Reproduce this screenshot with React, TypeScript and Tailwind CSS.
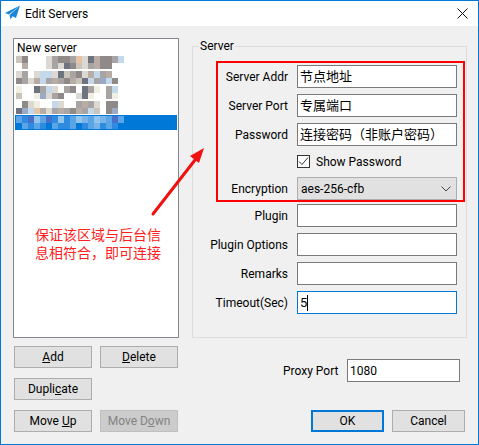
import React from 'react';

const palette: Record<string, string> = {
  '.': 'transparent',
  a: '#c9c4bc',
  b: '#8f8a88',
  c: '#a8a4a4',
  d: '#dcd8d2',
  e: '#e6c4a8',
  f: '#c4d8ec',
  g: '#6d7480',
  h: '#f1eee2',
  i: '#9aa9c8',
  j: '#b8aca4',
  p: '#5aa5e6',
  q: '#2f8be0',
  r: '#93c4ee',
  s: '#4a6fc8',
  t: '#0078d7',
  u: '#76b4ea',
};

// blurred out server names, one string per row of blocks
const blurred: { rows: [string, string]; selected?: boolean }[] = [
  { rows: ['ab...dcbbcedgjbbcf', '.j...dcdgbadcjbb..'] },
  { rows: ['dc.dffdgacbdjfcj..', 'bcdjfcjcbjagfcifb.'] },
  { rows: ['h..gcfd.cb.gch.cf.', 'a..hidcb..dgh..ch.'] },
  { rows: ['.bdh..fd..cjcd.bb.', 'gifejdcjcbjcfa.bi.'] },
  { rows: ['pqsrpsqrqpruprupsp', 'tpqpqtpqqptqpuqpqt'], selected: true },
];

const Cell = ({ c, w }: { c: string; w: number }) => (
  <div className="h-full shrink-0" style={{ width: w, backgroundColor: palette[c] }} />
);

const Btn = ({ children, disabled, primary, className = '' }: { children: React.ReactNode; disabled?: boolean; primary?: boolean; className?: string }) => (
  <div
    className={`h-[22px] flex items-center justify-center text-[12px] ${
      disabled
        ? 'bg-[#cccccc] border border-[#bfbfbf] text-[#838383]'
        : primary
        ? 'bg-[#e1e1e1] border-2 border-[#0078d7] text-black'
        : 'bg-[#e1e1e1] border border-[#adadad] text-black'
    } ${className}`}
  >
    <span>{children}</span>
  </div>
);

const Field = ({ label, value, focused }: { label: string; value?: string; focused?: boolean }) => (
  <div className="flex items-center h-[23px]">
    <div className="w-[88px] text-right text-[12px] text-black whitespace-nowrap">{label}</div>
    <div
      className={`ml-[9px] w-[160px] h-[23px] bg-white border flex items-center pl-[2px] text-[13px] text-black whitespace-nowrap ${
        focused ? 'border-[#0078d7]' : 'border-[#7a7a7a]'
      }`}
    >
      {value}
      {focused && <div className="w-px h-[16px] bg-black" />}
    </div>
  </div>
);

export default function App() {
  return (
    <div
      className="relative w-[479px] h-[445px] border border-[#0078d7] bg-[#f0f0f0] flex flex-col overflow-hidden"
      style={{ fontFamily: 'Roboto, "Noto Sans CJK SC", sans-serif' }}
    >
      {/* Title bar */}
      <div className="h-[25px] bg-white flex items-center shrink-0 pl-[4px] pr-[10px]">
        <svg width="16" height="16" viewBox="0 0 16 16" className="shrink-0 mt-[-1px]">
          <path d="M15 0.5 L0 8 L4 9.5 Z" fill="#1a86d9" />
          <path d="M15 0.5 L4.6 10 L5.5 14.5 L7.5 11.2 L11 13 Z" fill="#1a86d9" />
        </svg>
        <div className="ml-[4px] text-[12px] text-black">Edit Servers</div>
        <svg width="11" height="11" viewBox="0 0 11 11" className="ml-auto">
          <path d="M0.5 0.5 L10.5 10.5 M10.5 0.5 L0.5 10.5" stroke="#111" strokeWidth="1" fill="none" />
        </svg>
      </div>

      <div className="flex-1 flex pt-[12px] pl-[12px]">
        {/* Left column */}
        <div className="w-[166px] shrink-0">
          <div className="h-[300px] bg-white border border-[#828790] pt-[1px] pl-[1px] pr-[1px]">
            <div className="h-[15px] pl-[2px] pt-[1px] text-[12px] leading-[15px] text-black">New server</div>
            {blurred.map((item, i) => (
              <div key={i} className={`h-[15px] pl-[1px] py-[1px] ${item.selected ? 'bg-[#0078d7]' : ''}`}>
                {item.rows.map((row, j) => (
                  <div key={j} className="flex h-[6.5px]">
                    {row.split('').map((c, k) => (
                      <Cell key={k} c={c} w={6} />
                    ))}
                  </div>
                ))}
              </div>
            ))}
          </div>
          <div className="mt-[8px] flex gap-[8px] pl-[1px]">
            <Btn className="w-[78px]"><u>A</u>dd</Btn>
            <Btn className="w-[78px]"><u>D</u>elete</Btn>
          </div>
          <div className="mt-[10px] pl-[1px]">
            <Btn className="w-[78px]">Dupli<u>c</u>ate</Btn>
          </div>
          <div className="mt-[10px] flex gap-[8px] pl-[1px]">
            <Btn className="w-[78px]">Move <u>U</u>p</Btn>
            <Btn className="w-[78px]" disabled>Move D<u>o</u>wn</Btn>
          </div>
        </div>

        {/* Right column */}
        <div className="ml-[13px] w-[275px] shrink-0">
          <div className="relative mt-[8px] h-[292px] border border-[#dcdcdc] pl-[7px] pt-[18px]">
            <div className="absolute left-[6px] top-[-9px] px-[1px] bg-[#f0f0f0] text-[12px] leading-[16px] text-black">Server</div>
            <div className="flex flex-col gap-[6px]">
              <Field label="Server Addr" value="节点地址" />
              <Field label="Server Port" value="专属端口" />
              <Field label="Password" value="连接密码（非账户密码）" />
            </div>
            <div className="flex items-center h-[31px] ml-[97px]">
              <div className="w-[13px] h-[13px] border border-[#333] bg-white flex items-center justify-center">
                <svg width="11" height="11" viewBox="0 0 11 11">
                  <path d="M1 5.5 L4 8.5 L10 1.5" stroke="#333" strokeWidth="1" fill="none" />
                </svg>
              </div>
              <div className="ml-[6px] text-[12px] text-black">Show Password</div>
            </div>
            <div className="flex items-center h-[23px]">
              <div className="w-[88px] text-right text-[12px] text-black">Encryption</div>
              <div className="ml-[9px] w-[160px] h-[23px] bg-[#e1e1e1] border border-[#adadad] flex items-center pl-[3px] pr-[5px] text-[12px] text-black">
                aes-256-cfb
                <svg width="10" height="6" viewBox="0 0 10 6" className="ml-auto">
                  <path d="M0.5 0.5 L5 5 L9.5 0.5" stroke="#444" strokeWidth="1" fill="none" />
                </svg>
              </div>
            </div>
            <div className="mt-[4px] flex flex-col gap-[6px]">
              <Field label="Plugin" />
              <Field label="Plugin Options" />
              <Field label="Remarks" />
              <Field label="Timeout(Sec)" value="5" focused />
            </div>
          </div>

          <div className="mt-[21px] flex items-center h-[23px]">
            <div className="ml-[91px] text-[12px] text-black whitespace-nowrap">Proxy Port</div>
            <div className="ml-auto mr-[7px] w-[113px] h-[23px] bg-white border border-[#7a7a7a] flex items-center pl-[2px] text-[12px] text-black">1080</div>
          </div>
          <div className="mt-[28px] flex gap-[8px] pl-[119px]">
            <Btn className="w-[73px]" primary>OK</Btn>
            <Btn className="w-[73px]">Cancel</Btn>
          </div>
        </div>
      </div>

      {/* Red annotation over the form */}
      <div className="absolute left-[215px] top-[60px] w-[249px] h-[141px] border-2 border-[#ff0000]" />
      <svg className="absolute left-0 top-0" width="479" height="445">
        <path d="M152 213 L194 159" stroke="#f01010" strokeWidth="3" strokeLinecap="round" fill="none" />
        <polygon points="203,147 189,155 198,162" fill="#f01010" />
      </svg>
      <div className="absolute left-[34px] top-[225px] w-[130px] text-[14px] leading-[18px] text-[#ff2020] whitespace-nowrap">
        保证该区域与后台信<br />息相符合，即可连接
      </div>
    </div>
  );
}
